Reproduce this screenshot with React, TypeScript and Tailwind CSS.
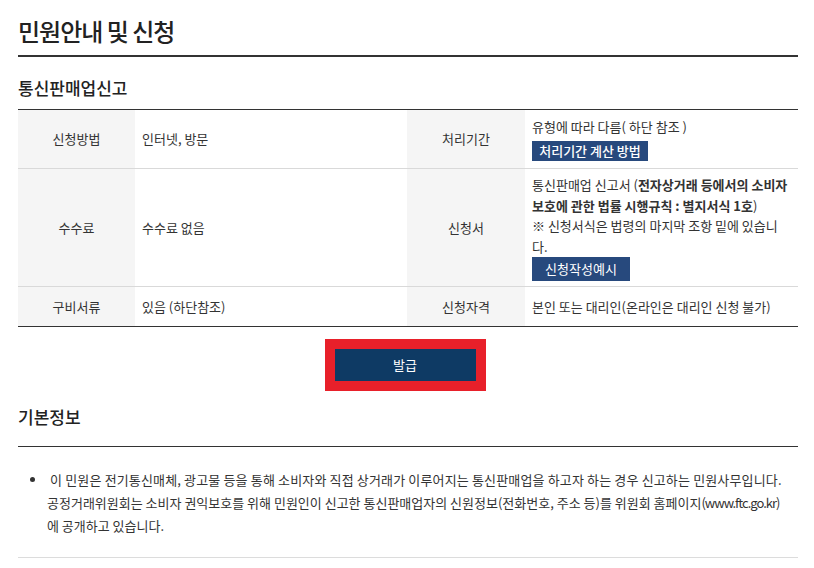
import React from "react";

const font = { fontFamily: '"Noto Sans CJK KR", "Noto Sans", sans-serif' };

export default function App() {
  return (
    <div className="min-h-[568px] bg-white text-[#333]" style={font}>
      <div className="ml-[18px] w-[780px]">
        {/* Title */}
        <div className="pt-[16px] pb-[9px] border-b-2 border-[#333]">
          <h1 className="text-[24px] leading-[30px] font-medium tracking-[-1px] text-[#222]">민원안내 및 신청</h1>
        </div>

        {/* Subtitle */}
        <h2 className="mt-[19px] mb-[9px] text-[17px] leading-[24px] font-medium text-[#222]">통신판매업신고</h2>

        {/* Table */}
        <div className="border-t border-[#333] border-b text-[13px]">
          <div className="grid grid-cols-[117px_272px_118px_273px] h-[59px] border-b border-[#d9d9d9]">
            <div className="bg-[#f5f5f5] flex items-center justify-center">신청방법</div>
            <div className="flex items-center pl-[7px]">인터넷, 방문</div>
            <div className="bg-[#f5f5f5] flex items-center justify-center">처리기간</div>
            <div className="pl-[7px] pt-[7px] leading-[20px]">
              <div>유형에 따라 다름( 하단 참조 )</div>
              <div className="mt-[4px] inline-flex h-[20px] w-[116px] items-center justify-center bg-[#27497d] text-white font-medium">처리기간 계산 방법</div>
            </div>
          </div>
          <div className="grid grid-cols-[117px_272px_118px_273px] h-[118px] border-b border-[#d9d9d9]">
            <div className="bg-[#f5f5f5] flex items-center justify-center">수수료</div>
            <div className="flex items-center pl-[7px]">수수료 없음</div>
            <div className="bg-[#f5f5f5] flex items-center justify-center">신청서</div>
            <div className="pl-[7px] pt-[6px] leading-[20.5px] whitespace-nowrap">
              <div>
                통신판매업 신고서 (<b className="font-bold">전자상거래 등에서의 소비자</b>
              </div>
              <div>
                <b className="font-bold">보호에 관한 법률 시행규칙 : 별지서식 1호</b>)
              </div>
              <div>※ 신청서식은 법령의 마지막 조항 밑에 있습니</div>
              <div>다.</div>
              <div className="inline-flex h-[24px] w-[98px] items-center justify-center bg-[#27497d] text-white">신청작성예시</div>
            </div>
          </div>
          <div className="grid grid-cols-[117px_272px_118px_273px] h-[39px]">
            <div className="bg-[#f5f5f5] flex items-center justify-center">구비서류</div>
            <div className="flex items-center pl-[7px]">있음 (하단참조)</div>
            <div className="bg-[#f5f5f5] flex items-center justify-center">신청자격</div>
            <div className="flex items-center pl-[7px]">본인 또는 대리인(온라인은 대리인 신청 불가)</div>
          </div>
        </div>

        {/* Issue button */}
        <div className="mt-[12px] flex justify-center">
          <div className="ml-[-6px] border-[10px] border-[#e8202a]">
            <div className="flex h-[32px] w-[141px] items-center justify-center bg-[#0e3a64] text-[13px] text-white">발급</div>
          </div>
        </div>

        {/* 기본정보 */}
        <div className="mt-[14px] pb-[17px] border-b border-[#333]">
          <h2 className="text-[17px] leading-[24px] font-medium text-[#222]">기본정보</h2>
        </div>
        <div className="pt-[21px] pb-[20px] border-b border-[#dcdcdc]">
          <ul className="pl-[29px] text-[13px] leading-[23px] list-disc">
            <li className="whitespace-nowrap">
              <span className="tracking-[0.15px]">
                &nbsp;이 민원은 전기통신매체, 광고물 등을 통해 소비자와 직접 상거래가 이루어지는 통신판매업을 하고자 하는 경우 신고하는 민원사무입니다.
              </span>
              <br />
              공정거래위원회는 소비자 권익보호를 위해 민원인이 신고한 통신판매업자의 신원정보(전화번호, 주소 등)를 위원회 홈페이지
              <span className="tracking-[-1px]">(www.ftc.go.kr)</span>
              <br />
              에 공개하고 있습니다.
            </li>
          </ul>
        </div>
      </div>
    </div>
  );
}
